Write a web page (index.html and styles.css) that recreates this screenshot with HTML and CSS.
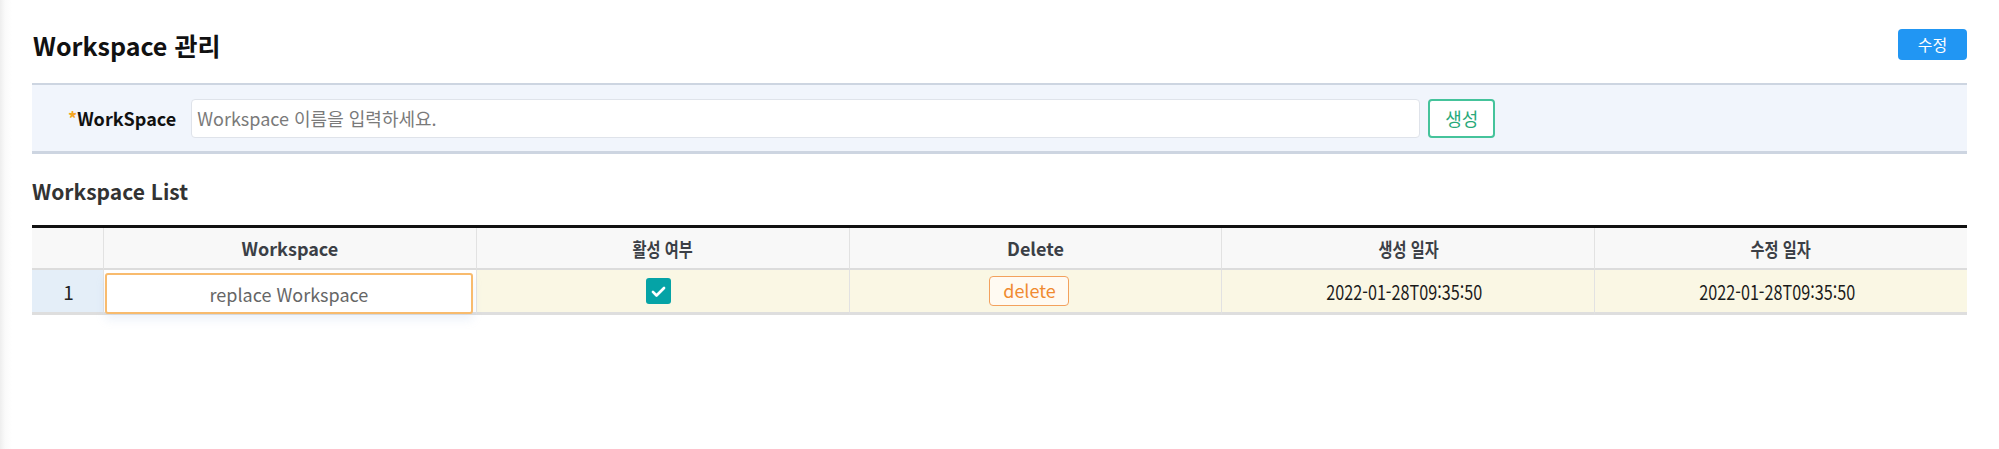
FILE: index.html
```html
<!DOCTYPE html>
<html lang="ko">
<head>
<meta charset="utf-8">
<title>Workspace 관리</title>
<link rel="stylesheet" href="styles.css">
</head>
<body>
<div class="page">
  <div class="header">
    <h1 class="title">Workspace 관리</h1>
    <button class="btn-edit">수정</button>
  </div>

  <div class="panel">
    <label class="label"><span class="req">*</span>WorkSpace</label>
    <input class="name-input" type="text" placeholder="Workspace 이름을 입력하세요.">
    <button class="btn-create">생성</button>
  </div>

  <h2 class="subtitle">Workspace List</h2>

  <div class="grid">
    <div class="th th-num"></div>
    <div class="th">Workspace</div>
    <div class="th"><span class="narrow">활성 여부</span></div>
    <div class="th">Delete</div>
    <div class="th"><span class="narrow">생성 일자</span></div>
    <div class="th"><span class="narrow">수정 일자</span></div>

    <div class="td td-num">1</div>
    <div class="td td-edit"><div class="cell-input">replace Workspace</div></div>
    <div class="td"><span class="check"><svg viewBox="0 0 24 24" width="19" height="19"><path d="M5 12.5l4.5 4.5L19 7.5" fill="none" stroke="#fff" stroke-width="3.4" stroke-linecap="round" stroke-linejoin="round"/></svg></span></div>
    <div class="td"><button class="btn-delete">delete</button></div>
    <div class="td"><span class="narrow date">2022-01-28T09:35:50</span></div>
    <div class="td"><span class="narrow date">2022-01-28T09:35:50</span></div>
  </div>
</div>
</body>
</html>
```

FILE: styles.css
```css
* { box-sizing: border-box; }

html, body {
  margin: 0;
  padding: 0;
}

body {
  font-family: "Noto Sans CJK KR", "Noto Sans", sans-serif;
  color: #111;
  background: linear-gradient(to right, #eeeeee 0, #fafafa 5px, #ffffff 12px);
  min-height: 449px;
}

.page {
  padding: 27px 32px 0 32px;
}

.header {
  display: flex;
  align-items: center;
  justify-content: space-between;
  height: 36px;
}

.title {
  margin: 0;
  font-size: 25px;
  line-height: 36px;
  font-weight: 700;
  color: #111;
  padding-left: 1px;
}

.btn-edit {
  width: 69px;
  height: 31px;
  margin-top: -2px;
  border: none;
  border-radius: 4px;
  background: #2196f3;
  color: #fff;
  font-family: inherit;
  font-size: 16px;
  padding: 0;
}

.panel {
  margin-top: 20px;
  height: 71px;
  background: #f1f5fc;
  border-top: 2px solid #cdd5e1;
  border-bottom: 3px solid #cdd5e1;
  display: flex;
  align-items: center;
  padding-left: 36px;
}

.label {
  font-size: 18px;
  font-weight: 700;
  color: #111;
  margin-right: 15px;
  white-space: nowrap;
}

.req {
  color: #f5a623;
}

.name-input {
  width: 1229px;
  height: 39px;
  border: 1.5px solid #dfe3ea;
  border-radius: 4px;
  background: #fff;
  font-family: inherit;
  font-size: 18px;
  padding: 0 5px;
  color: #333;
  outline: none;
}

.name-input::placeholder {
  color: #7a7a7a;
}

.btn-create {
  margin-left: 8px;
  width: 67px;
  height: 39px;
  background: #fff;
  border: 2px solid #45c39b;
  border-radius: 4px;
  color: #27a97a;
  font-family: inherit;
  font-size: 18px;
  padding: 0;
}

.subtitle {
  margin: 22px 0 0 0;
  font-size: 21px;
  line-height: 30px;
  font-weight: 700;
  color: #333;
}

.grid {
  margin-top: 19px;
  display: grid;
  grid-template-columns: 71px repeat(5, 1fr);
  border-top: 3px solid #111;
}

.th {
  height: 42px;
  background: #f8f8f8;
  border-left: 1px solid #e2e2e2;
  border-bottom: 2px solid #dcdcdc;
  display: flex;
  align-items: center;
  justify-content: center;
  font-size: 18px;
  font-weight: 700;
  color: #3b3f46;
}

.th-num {
  border-left: none;
}

.td {
  height: 45px;
  background: #faf7e4;
  border-left: 1px solid #e2e2e2;
  border-bottom: 3px solid #dedede;
  display: flex;
  align-items: center;
  justify-content: center;
  font-size: 18px;
  color: #222;
}

.td-num {
  border-left: none;
  background: #e4eef8;
  font-size: 19px;
  color: #222;
  padding-left: 2px;
}

.td-edit {
  background: #fff;
  align-items: flex-start;
  padding: 3px 3px 0 1px;
  position: relative;
}

.cell-input {
  width: 100%;
  height: 41px;
  border: 2px solid #f8bb6e;
  border-radius: 3px;
  background: #fff;
  display: flex;
  align-items: center;
  justify-content: center;
  font-size: 18px;
  color: #666;
  box-shadow: 0 6px 10px rgba(160, 190, 230, 0.18);
  position: relative;
  z-index: 1;
}

.narrow {
  display: inline-block;
  transform: scaleX(0.8);
  white-space: nowrap;
}

.th .narrow {
  font-size: 19px;
}

.date {
  font-size: 20px;
  color: #1a1a1a;
  transform: scaleX(0.81);
  margin-left: -8px;
}

.check {
  width: 25px;
  height: 26px;
  border-radius: 3px;
  background: #05a3a6;
  display: inline-flex;
  align-items: center;
  justify-content: center;
  margin-left: -9px;
}

.btn-delete {
  width: 80px;
  height: 30px;
  border: 1.5px solid #f3a15d;
  border-radius: 4px;
  background: #fffaf2;
  color: #f08a30;
  font-family: inherit;
  font-size: 18px;
  padding: 0 0 2px 0;
  margin-left: -12px;
}
```
